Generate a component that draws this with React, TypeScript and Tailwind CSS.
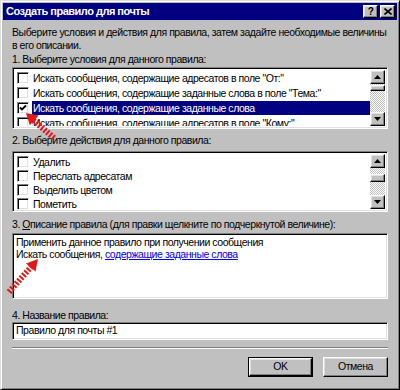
const raised =
  "border border-t-white border-l-white border-r-black border-b-black shadow-[inset_-1px_-1px_0_#808080,inset_1px_1px_0_#dfdfdf] bg-[#c0c0c0]";
const sunken =
  "border border-t-[#808080] border-l-[#808080] border-r-white border-b-white shadow-[inset_1px_1px_0_#000,inset_-1px_-1px_0_#dfdfdf] bg-white";

function Checkbox({ checked }: { checked?: boolean }) {
  return (
    <span className="relative flex h-[12px] w-[12px] shrink-0 items-center justify-center border border-t-[#808080] border-l-[#808080] border-r-white border-b-white shadow-[inset_1px_1px_0_#000,inset_-1px_-1px_0_#dfdfdf] bg-white">
      {checked ? (
        <svg width="8" height="8" viewBox="0 0 8 8">
          <path d="M1 3.5 L3 5.5 L7 1.5" stroke="#000" strokeWidth="1.8" fill="none" />
        </svg>
      ) : null}
    </span>
  );
}

function Arrow({ up }: { up?: boolean }) {
  return (
    <svg width="7" height="4" viewBox="0 0 7 4">
      <polygon points={up ? "3.5,0 7,4 0,4" : "0,0 7,0 3.5,4"} fill="#000" />
    </svg>
  );
}

function Scrollbar({ thumbTop, thumbH }: { thumbTop: number; thumbH: number }) {
  return (
    <div className="flex h-full w-[15px] shrink-0 flex-col bg-[repeating-conic-gradient(#fff_0_25%,#c0c0c0_0_50%)] bg-[length:2px_2px]">
      <div className={`${raised} flex h-[14px] items-center justify-center`}>
        <Arrow up />
      </div>
      <div className="relative flex-1">
        <div className={`${raised} absolute left-0 right-0`} style={{ top: thumbTop, height: thumbH }} />
      </div>
      <div className={`${raised} flex h-[14px] items-center justify-center`}>
        <Arrow />
      </div>
    </div>
  );
}

function Row({ text, checked, selected, tight }: { text: string; checked?: boolean; selected?: boolean; tight?: boolean }) {
  return (
    <div className={`${tight ? "h-[14px]" : "h-[15px]"} flex items-center gap-[3px] pl-[2px]`}>
      <Checkbox checked={checked} />
      <span
        className={
          selected
            ? "flex-1 whitespace-nowrap bg-[#000080] pl-[1px] leading-[14px] text-white"
            : "whitespace-nowrap pl-[1px] leading-[14px]"
        }
      >
        {text}
      </span>
    </div>
  );
}

function RedArrow({ d, head }: { d: string; head: string }) {
  return (
    <g>
      <path d={d} stroke="#e01818" strokeWidth="6" strokeDasharray="2 1.6" fill="none" />
      <polygon points={head} fill="#e01818" />
    </g>
  );
}

export default function App() {
  const conditions = [
    'Искать сообщения, содержащие адресатов в поле "От:"',
    'Искать сообщения, содержащие заданные слова в поле "Тема:"',
    "Искать сообщения, содержащие заданные слова",
    'Искать сообщения, содержащие адресатов в поле "Кому:"',
  ];
  const actions = ["Удалить", "Переслать адресатам", "Выделить цветом", "Пометить"];

  return (
    <div className="relative flex h-[390px] w-[400px] flex-col overflow-hidden border border-t-[#dfdfdf] border-l-[#dfdfdf] border-r-black border-b-black bg-[#c0c0c0] p-[2px] font-['Liberation_Sans',Arial,sans-serif] text-[10.5px] tracking-[-0.45px] text-black shadow-[inset_1px_1px_0_#fff,inset_-1px_-1px_0_#808080]">
      <div className="flex h-[17px] shrink-0 items-center justify-between bg-[#000080] pl-[3px] pr-[2px]">
        <span className="text-[11px] font-bold tracking-[-0.5px] text-white">Создать правило для почты</span>
        <div className="flex gap-[2px]">
          <div className={`${raised} flex h-[13px] w-[15px] items-center justify-center text-[10px] font-bold leading-none`}>?</div>
          <div className={`${raised} flex h-[13px] w-[15px] items-center justify-center`}>
            <svg width="8" height="7" viewBox="0 0 8 7">
              <path d="M0.5 0.5 L7.5 6.5 M7.5 0.5 L0.5 6.5" stroke="#000" strokeWidth="1.6" />
            </svg>
          </div>
        </div>
      </div>

      <div className="flex flex-1 flex-col px-[9px]">
        <p className="mt-[6px] whitespace-nowrap leading-[13px]">
          Выберите условия и действия для правила, затем задайте необходимые величины
          <br />
          в его описании.
        </p>

        <div className="mt-[1px] h-[13px] leading-[13px]">1. Выберите условия для данного правила:</div>
        <div className={`${sunken} mt-[1px] flex h-[62px] p-[2px]`}>
          <div className="flex-1 overflow-hidden">
            {conditions.map((c, i) => (
              <Row key={c} text={c} checked={i === 2} selected={i === 2} />
            ))}
          </div>
          <Scrollbar thumbTop={1} thumbH={6} />
        </div>

        <div className="mt-[5px] h-[13px] leading-[13px]">2. Выберите действия для данного правила:</div>
        <div className={`${sunken} mt-[4px] flex h-[61px] p-[2px]`}>
          <div className="flex-1 overflow-hidden pt-[1px]">
            {actions.map((a) => (
              <Row key={a} text={a} tight />
            ))}
          </div>
          <Scrollbar thumbTop={6} thumbH={8} />
        </div>

        <div className="mt-[6px] h-[13px] leading-[13px]">
          3. <span className="underline">О</span>писание правила (для правки щелкните по подчеркнутой величине):
        </div>
        <div className={`${sunken} mt-[2px] h-[66px] px-[3px] py-[2px] leading-[12px]`}>
          <div>Применить данное правило при получении сообщения</div>
          <div>
            Искать сообщения, <span className="text-[#0000ee] underline">содержащие заданные слова</span>
          </div>
        </div>

        <div className="mt-[10px] h-[13px] leading-[13px]">4. Название правила:</div>
        <div className={`${sunken} flex h-[18px] items-center px-[3px]`}>Правило для почты #1</div>

        <div className="mt-[7px] h-[2px] border-t border-t-[#808080] border-b border-b-white" />

        <div className="mt-[8px] flex justify-end gap-[10px]">
          <div className="border border-black">
            <div className={`${raised} flex h-[18px] w-[63px] items-center justify-center`}>OK</div>
          </div>
          <div className={`${raised} flex h-[20px] w-[65px] items-center justify-center`}>Отмена</div>
        </div>
      </div>

      <svg className="pointer-events-none absolute left-0 top-0" width="400" height="390">
        <RedArrow d="M53 137 L32 119" head="25,112 28.8,124.2 37.6,114.4" />
        <RedArrow d="M8 291 L30 266" head="37,258 34.5,270.5 25,262.5" />
      </svg>
    </div>
  );
}
